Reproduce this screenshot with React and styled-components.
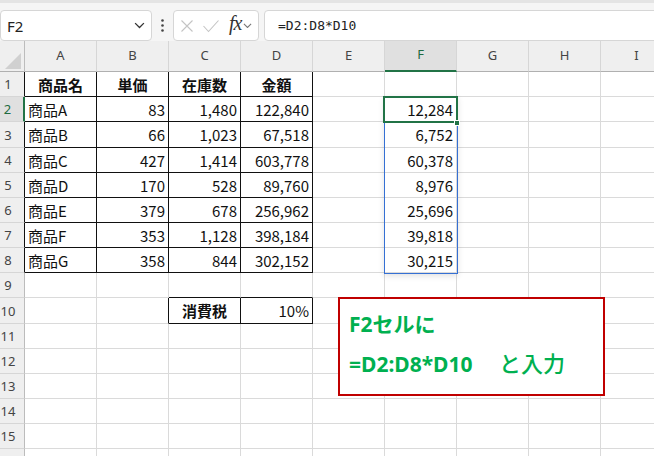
import React from 'react';
import styled, { createGlobalStyle } from 'styled-components';

const GlobalStyle = createGlobalStyle`
  html, body {
    margin: 0;
    padding: 0;
    width: 654px;
    height: 456px;
    overflow: hidden;
    background: #ffffff;
  }
`;

const Page = styled.div`
  width: 654px;
  height: 456px;
  overflow: hidden;
  font-family: "Noto Sans CJK JP", sans-serif;
`;

// formula bar
const Toolbar = styled.div`
  display: flex;
  align-items: stretch;
  height: 31px;
  padding-top: 7px;
  border-top: 3px solid #e4e4e4;
  background: #f5f5f5;
`;

const NameBox = styled.div`
  width: 152px;
  box-sizing: border-box;
  display: flex;
  align-items: center;
  justify-content: space-between;
  padding: 0 6px 0 6px;
  background: #fff;
  border: 1px solid #d6d6d6;
  border-radius: 4px;
  font-family: "Noto Sans", sans-serif;
  font-size: 15px;
  color: #222;
`;

const Dots = styled.div`
  width: 21px;
  display: flex;
  align-items: center;
  justify-content: center;
`;

const FxBox = styled.div`
  width: 86px;
  box-sizing: border-box;
  display: flex;
  align-items: center;
  padding-left: 6px;
  background: #fff;
  border: 1px solid #d6d6d6;
  border-radius: 4px;
`;

const FxLabel = styled.span`
  font-family: "Liberation Serif", serif;
  font-style: italic;
  font-size: 20px;
  color: #333;
  margin: 0 2px 4px 9px;
  letter-spacing: -1px;
`;

const FormulaInput = styled.div`
  flex: 1;
  margin-left: 5px;
  margin-right: -6px;
  display: flex;
  align-items: center;
  padding-left: 13px;
  background: #fff;
  border: 1px solid #d6d6d6;
  border-radius: 4px;
  font-family: "DejaVu Sans Mono", monospace;
  font-size: 13px;
  color: #222;
`;

// sheet
const Sheet = styled.div`
  position: relative;
  display: grid;
  grid-template-columns: 25px repeat(9, 72px);
  grid-template-rows: ${(p) => p.$rows};
`;

const Corner = styled.div`
  background: #efefef;
  border-right: 1px solid #bcbcbc;
  border-bottom: 1px solid #b0b0b0;
  display: flex;
  align-items: flex-end;
  justify-content: flex-end;
  padding: 0 3px 2px 0;
`;

const ColHeader = styled.div`
  display: flex;
  align-items: center;
  justify-content: center;
  padding-bottom: 3px;
  background: ${(p) => (p.$active ? '#e0e0e0' : '#efefef')};
  border-right: 1px solid #d6d6d6;
  border-bottom: ${(p) => (p.$active ? '2px solid #217346' : '1px solid #b0b0b0')};
  font-family: "Noto Sans", sans-serif;
  font-size: 13px;
  color: ${(p) => (p.$active ? '#1e6b40' : '#444')};
`;

const RowHeader = styled.div`
  display: flex;
  align-items: center;
  justify-content: center;
  padding-right: 8px;
  overflow: hidden;
  background: ${(p) => (p.$active ? '#e0e0e0' : '#efefef')};
  border-right: ${(p) => p.$edge};
  border-bottom: 1px solid #d6d6d6;
  font-family: "Noto Sans", sans-serif;
  font-size: 13px;
  color: ${(p) => (p.$active ? '#1e6b40' : '#444')};
`;

const Cell = styled.div`
  display: flex;
  align-items: center;
  justify-content: ${(p) => p.$align};
  padding: 0 3px;
  overflow: hidden;
  white-space: nowrap;
  border-right: 1px solid ${(p) => p.$br};
  border-bottom: 1px solid ${(p) => p.$bb};
  font-size: 15px;
  font-weight: ${(p) => (p.$bold ? 700 : 400)};
  color: #111;
`;

const RangeBox = styled.div`
  position: absolute;
  left: 384px;
  top: 55px;
  width: 72px;
  height: 176px;
  border: 1px solid #3570d4;
  box-shadow: 0 2px 6px rgba(0, 0, 0, 0.12);
  pointer-events: none;
`;

const Selection = styled.div`
  position: absolute;
  left: 383px;
  top: 55px;
  width: 71px;
  height: 23px;
  border: 2px solid #217346;
  pointer-events: none;
`;

const FillHandle = styled.div`
  position: absolute;
  left: 454px;
  top: 79px;
  width: 6px;
  height: 6px;
  background: #217346;
  border: 1px solid #fff;
  box-sizing: border-box;
`;

const Callout = styled.div`
  position: absolute;
  left: 338px;
  top: 256px;
  width: 267px;
  height: 99px;
  box-sizing: border-box;
  padding: 6px 0 0 9px;
  background: #fff;
  border: 2px solid #c00000;
  font-family: "Noto Sans", "Noto Sans CJK JP", sans-serif;
  font-weight: 700;
  font-size: 21px;
  color: #00b050;
`;

const CalloutLine = styled.div`
  height: 39px;
  line-height: 39px;
  white-space: pre;
`;

const Suffix = styled.span`
  font-weight: 500;
  font-size: 22px;
`;

const cols = ['A', 'B', 'C', 'D', 'E', 'F', 'G', 'H', 'I'];
const rowHeights = [25, 25, 26, 25, 25, 25, 25, 25, 25, 26, 25, 25, 25, 25, 25, 25];

const products = [
  ['商品A', 83, 1480, 122840, 12284],
  ['商品B', 66, 1023, 67518, 6752],
  ['商品C', 427, 1414, 603778, 60378],
  ['商品D', 170, 528, 89760, 8976],
  ['商品E', 379, 678, 256962, 25696],
  ['商品F', 353, 1128, 398184, 39818],
  ['商品G', 358, 844, 302152, 30215],
];

const fmt = (n) => n.toLocaleString('en-US');

const cells = {};
['商品名', '単価', '在庫数', '金額'].forEach((t, c) => {
  cells[`1-${c}`] = { text: t, align: 'center', bold: true };
});
products.forEach((p, i) => {
  const r = i + 2;
  cells[`${r}-0`] = { text: p[0], align: 'flex-start' };
  cells[`${r}-1`] = { text: fmt(p[1]), align: 'flex-end' };
  cells[`${r}-2`] = { text: fmt(p[2]), align: 'flex-end' };
  cells[`${r}-3`] = { text: fmt(p[3]), align: 'flex-end' };
  cells[`${r}-5`] = { text: fmt(p[4]), align: 'flex-end' };
});
cells['10-2'] = { text: '消費税', align: 'center', bold: true };
cells['10-3'] = { text: '10%', align: 'flex-end' };

const inTable = (r, c) =>
  (r >= 1 && r <= 8 && c >= 0 && c <= 3) || (r === 10 && (c === 2 || c === 3));

const GRID = '#dadada';

const Chevron = ({ size = 10, color = '#444' }) => (
  <svg width={size} height={size * 0.6} viewBox="0 0 10 6">
    <path d="M1 1 L5 5 L9 1" fill="none" stroke={color} strokeWidth="1.2" />
  </svg>
);

const App = () => {
  const rowsTemplate = `31px ${rowHeights.map((h) => `${h}px`).join(' ')}`;

  return (
    <Page>
      <GlobalStyle />
      <Toolbar>
        <NameBox>
          <span>F2</span>
          <Chevron size={11} color="#333" />
        </NameBox>
        <Dots>
          <svg width="3" height="13" viewBox="0 0 3 13">
            <circle cx="1.5" cy="1.5" r="1.3" fill="#444" />
            <circle cx="1.5" cy="6.5" r="1.3" fill="#444" />
            <circle cx="1.5" cy="11.5" r="1.3" fill="#444" />
          </svg>
        </Dots>
        <FxBox>
          <svg width="14" height="14" viewBox="0 0 14 14">
            <path d="M1.5 1.5 L12.5 12.5 M12.5 1.5 L1.5 12.5" stroke="#c4c4c4" strokeWidth="1.1" />
          </svg>
          <svg width="18" height="14" viewBox="0 0 18 14" style={{ marginLeft: 8 }}>
            <path d="M1.5 7 L6.5 12.5 L16.5 1.5" fill="none" stroke="#c4c4c4" strokeWidth="1.1" />
          </svg>
          <FxLabel>fx</FxLabel>
          <Chevron size={9} color="#777" />
        </FxBox>
        <FormulaInput>=D2:D8*D10</FormulaInput>
      </Toolbar>

      <Sheet $rows={rowsTemplate}>
        <Corner>
          <svg width="16" height="16" viewBox="0 0 16 16">
            <path d="M16 0 L16 16 L0 16 Z" fill="#d0d0d0" />
          </svg>
        </Corner>
        {cols.map((c) => (
          <ColHeader key={c} $active={c === 'F'}>
            {c}
          </ColHeader>
        ))}

        {rowHeights.map((_, i) => {
          const r = i + 1;
          let edge = '1px solid #bcbcbc';
          if (r === 2) edge = '2px solid #217346';
          else if (r <= 8) edge = '1px solid #111';
          return (
            <React.Fragment key={r}>
              <RowHeader $active={r === 2} $edge={edge}>
                {r}
              </RowHeader>
              {cols.map((_, c) => {
                const cell = cells[`${r}-${c}`];
                const br = inTable(r, c) || inTable(r, c + 1) ? '#111' : GRID;
                const bb = inTable(r, c) || inTable(r + 1, c) ? '#111' : GRID;
                return (
                  <Cell
                    key={c}
                    $br={br}
                    $bb={bb}
                    $align={cell ? cell.align : 'flex-start'}
                    $bold={cell && cell.bold}
                  >
                    {cell ? cell.text : ''}
                  </Cell>
                );
              })}
            </React.Fragment>
          );
        })}

        <RangeBox />
        <Selection />
        <FillHandle />

        <Callout>
          <CalloutLine>F2セルに</CalloutLine>
          <CalloutLine>
            {'=D2:D8*D10　 '}
            <Suffix>と入力</Suffix>
          </CalloutLine>
        </Callout>
      </Sheet>
    </Page>
  );
};

export default App;
